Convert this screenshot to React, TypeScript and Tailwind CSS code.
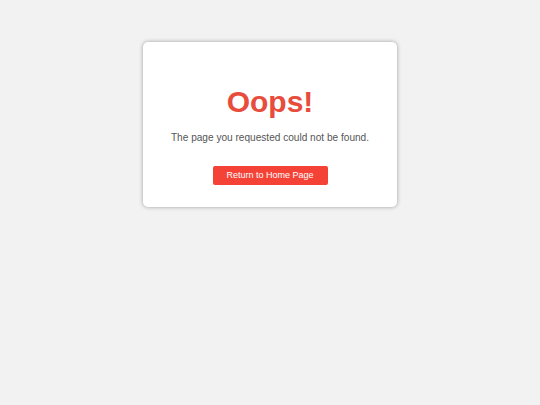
export default function App() {
  return (
    <div className="min-h-screen w-full bg-[#f2f2f2] pt-[42px] font-['Liberation_Sans',Arial,sans-serif]">
      <div className="mx-auto flex w-[254px] flex-col items-center rounded-[5px] bg-white px-4 pt-[42px] pb-[22px] shadow-[0_0_4px_rgba(0,0,0,0.35)]">
        <h1 className="text-[30px] font-bold leading-[36px] text-[#e74c3c]">Oops!</h1>
        <p className="mt-3 text-[10.1px] leading-[12px] text-[#555]">
          The page you requested could not be found.
        </p>
        <button
          type="button"
          className="mt-[22px] h-[19px] w-[115px] rounded-[2px] bg-[#f44336] text-[9px] text-white"
        >
          Return to Home Page
        </button>
      </div>
    </div>
  );
}
